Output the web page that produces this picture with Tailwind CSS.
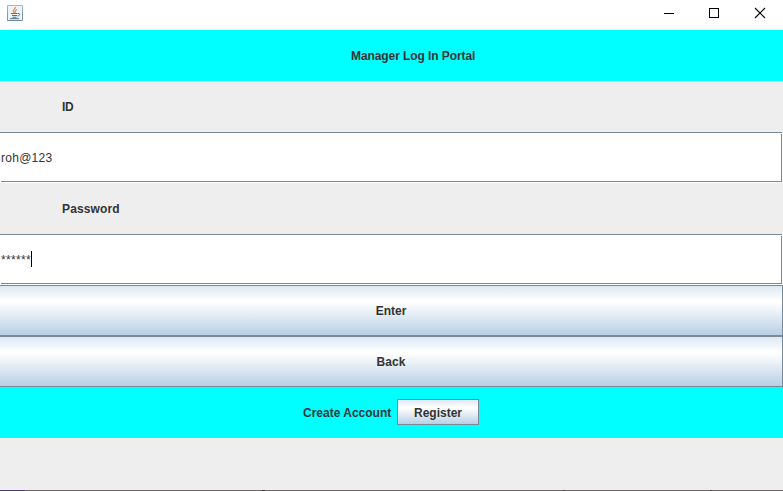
<!DOCTYPE html>
<html lang="en">
<head>
<meta charset="utf-8">
<title>Manager Log In Portal</title>
<script src="https://cdn.jsdelivr.net/npm/@tailwindcss/browser@4"></script>
</head>
<body class="w-[783px] h-[491px] overflow-hidden bg-[#eeeeee] font-['Liberation_Sans',Arial,sans-serif] text-[12px] leading-[14px] text-[#333333] flex flex-col">
<header class="h-[30px] shrink-0 bg-white flex items-start justify-between">
  <svg class="ml-[7px] mt-[5px]" width="16" height="16" viewBox="0 0 16 16" fill="none">
    <defs><linearGradient id="g" x1="0" y1="0" x2="0" y2="1"><stop offset="0" stop-color="#a3bace"/><stop offset="1" stop-color="#6d8ca3"/></linearGradient></defs>
    <rect width="16" height="16" rx="1" fill="url(#g)"/>
    <rect x="1" y="1" width="14" height="14" fill="#eef3f7"/>
    <path d="M8.500 2C8.800 4 5.500 4.500 6.200 6.200C6.500 7 7.500 7.200 7.500 8M10 4.500C8 5.300 8 6 8.500 7.500" stroke="#e88a50" stroke-width="1.200"/>
    <path d="M4 8.500H10.500M5 10.500H10M5.500 12.300H9.500M10.800 8.500C13.500 8 13.300 10.500 10.500 11M3 13.700H12" stroke="#44749b" stroke-width="1"/>
  </svg>
  <div class="flex">
    <svg width="137" height="30" viewBox="0 0 137 30" fill="none" stroke="#000" class="block">
      <path d="M18 13.500H28M63.500 8.500H72.500V17.500H63.500Z" shape-rendering="crispEdges"/>
      <path d="M109 8L119 18M119 8L109 18" stroke-width="1.100"/>
    </svg>
  </div>
</header>
<main class="flex flex-col shrink-0">
  <h1 class="h-[51px] bg-[#00ffff] flex items-center pl-[351px] font-bold"><span class="whitespace-nowrap tracking-[-0.08px]">Manager Log In Portal</span></h1>
  <div class="h-[51px] flex items-center pl-[62px] font-bold tracking-[-0.4px]">ID</div>
  <div class="h-[51px] bg-white flex flex-col">
    <div class="h-px w-[782px] bg-[#7a8a99]"></div>
    <div class="mt-px ml-px w-[781px] h-[48px] border-r border-b border-[#7a8a99] flex items-center pt-px tracking-[0.27px]">roh@123</div>
  </div>
  <div class="h-[51px] flex items-center pl-[62px] font-bold tracking-[0.13px]">Password</div>
  <div class="h-[51px] bg-white flex flex-col">
    <div class="h-px w-[782px] bg-[#7a8a99]"></div>
    <div class="mt-px ml-px w-[781px] h-[48px] border-r border-b border-[#7a8a99] flex items-center"><span class="tracking-[0.33px]">******</span><span class="w-px h-[16px] mb-[2px] bg-black"></span></div>
  </div>
  <button class="h-[51px] border-y border-r border-[#7a8a99] bg-linear-[180deg,#dde8f3_0%,#ffffff_30%,#ffffff_33%,#b8cfe5_100%] font-bold flex items-center justify-center"><span>Enter</span></button>
  <button class="h-[51px] border-y border-r border-[#7a8a99] bg-linear-[180deg,#dde8f3_0%,#ffffff_30%,#ffffff_33%,#b8cfe5_100%] font-bold flex items-center justify-center"><span class="tracking-[0.1px]">Back</span></button>
  <div class="h-[51px] bg-[#00ffff] flex items-center pl-[303px] font-bold">
    <span class="w-[94px] whitespace-nowrap">Create Account</span>
    <button class="w-[82px] h-[26px] mb-px border border-[#7a8a99] bg-linear-[180deg,#dde8f3_0%,#ffffff_30%,#ffffff_33%,#b8cfe5_100%] flex items-center justify-center font-bold pt-px">Register</button>
  </div>
</main>
<footer class="mt-auto h-px flex bg-[#6c6869]">
  <div class="w-[25px] bg-[#51406c]"></div>
  <div class="ml-[237px] w-[3px] bg-[#302c30]"></div>
  <div class="ml-[298px] w-[2px] bg-[#454044]"></div>
  <div class="ml-[145px] w-[2px] bg-[#454044]"></div>
</footer>
</body>
</html>
